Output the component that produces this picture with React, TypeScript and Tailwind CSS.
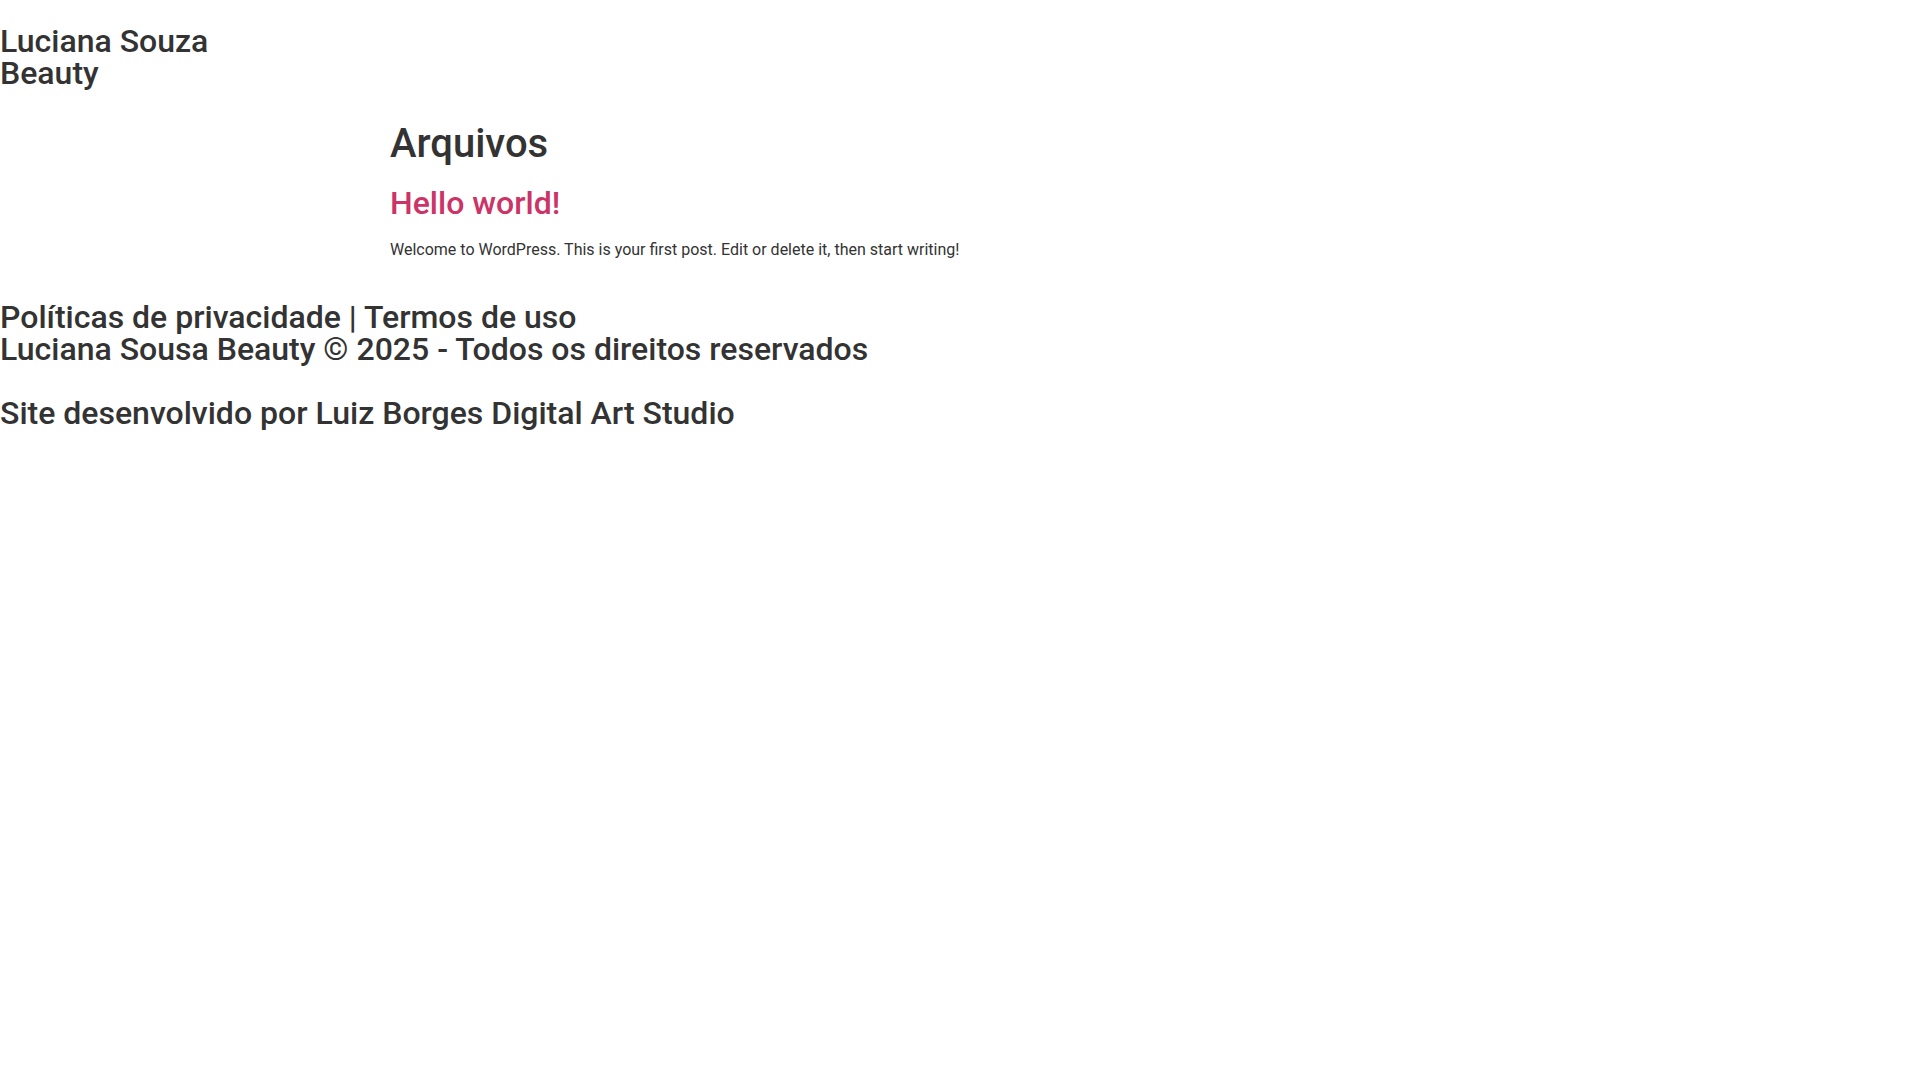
export default function App() {
  return (
    <div className="min-h-screen w-full bg-white font-['Roboto',sans-serif] text-[#333333]">
      <header className="pt-[25px]">
        <div className="w-[240px] text-[32px] leading-[32px] font-medium">
          Luciana Souza Beauty
        </div>
      </header>
      <main className="mx-auto w-[1140px] pt-[31px]">
        <h1 className="text-[40px] leading-[48px] font-medium">Arquivos</h1>
        <article>
          <h2 className="mt-[16px] text-[32px] leading-[38.4px] font-medium">
            <a href="#" className="text-[#cc3366]">Hello world!</a>
          </h2>
          <p className="mt-[16px] text-base leading-6">
            Welcome to WordPress. This is your first post. Edit or delete it, then start writing!
          </p>
        </article>
      </main>
      <footer className="mt-[39px] text-[32px] leading-[32px] font-medium">
        <p>Políticas de privacidade | Termos de uso</p>
        <p>Luciana Sousa Beauty © 2025 - Todos os direitos reservados</p>
        <p className="mt-[32px]">Site desenvolvido por Luiz Borges Digital Art Studio</p>
      </footer>
    </div>
  );
}
